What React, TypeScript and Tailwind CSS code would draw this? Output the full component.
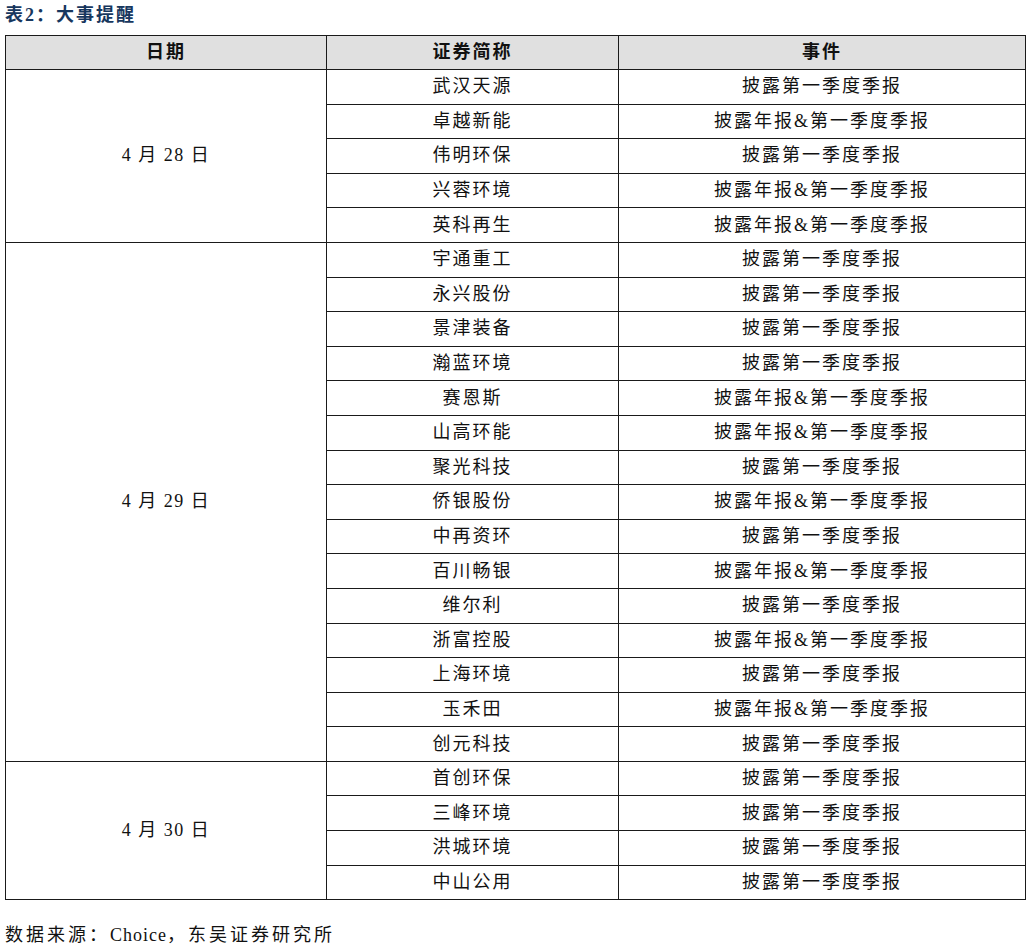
import React from "react"

const A = "披露第一季度季报"
const B = "披露年报&第一季度季报"

const groups: { date: [string, string]; rows: [string, string][] }[] = [
  {
    date: ["4", "28"],
    rows: [
      ["武汉天源", A],
      ["卓越新能", B],
      ["伟明环保", A],
      ["兴蓉环境", B],
      ["英科再生", B],
    ],
  },
  {
    date: ["4", "29"],
    rows: [
      ["宇通重工", A],
      ["永兴股份", A],
      ["景津装备", A],
      ["瀚蓝环境", A],
      ["赛恩斯", B],
      ["山高环能", B],
      ["聚光科技", A],
      ["侨银股份", B],
      ["中再资环", A],
      ["百川畅银", B],
      ["维尔利", A],
      ["浙富控股", B],
      ["上海环境", A],
      ["玉禾田", B],
      ["创元科技", A],
    ],
  },
  {
    date: ["4", "30"],
    rows: [
      ["首创环保", A],
      ["三峰环境", A],
      ["洪城环境", A],
      ["中山公用", A],
    ],
  },
]

const cell = "border border-[#1a1a1a] p-0 text-center align-middle"

const App = () => {
  return (
    <div className="min-h-screen bg-white px-[5px] font-['Liberation_Serif','Noto_Sans_CJK_SC',serif] text-[#111]">
      {/* Title */}
      <div className="h-[35px] pt-[3px] text-[18px] leading-[24px] font-bold tracking-[2px] text-[#17375e]">
        表2：大事提醒
      </div>

      <table className="w-[1020px] table-fixed border-collapse text-[18px] tracking-[2px]">
        <colgroup>
          <col className="w-[321px]" />
          <col className="w-[292px]" />
          <col className="w-[407px]" />
        </colgroup>
        <thead>
          <tr className="h-[34px] bg-[#e0e0e0] font-bold">
            <th className={cell}>日期</th>
            <th className={cell}>证券简称</th>
            <th className={cell}>事件</th>
          </tr>
        </thead>
        <tbody>
          {groups.map((g) =>
            g.rows.map(([name, event], i) => (
              <tr key={name} className="h-[34.6px]">
                {i === 0 && (
                  <td rowSpan={g.rows.length} className={cell}>
                    <span className="tracking-[1.5px]">
                      {g.date[0]} 月 {g.date[1]} 日
                    </span>
                  </td>
                )}
                <td className={cell}>{name}</td>
                <td className={cell}>{event}</td>
              </tr>
            ))
          )}
        </tbody>
      </table>

      {/* Source */}
      <div className="mt-[23px] text-[18px] leading-[24px] tracking-[3px]">
        数据来源：<span className="tracking-[1px]">Choice</span>，东吴证券研究所
      </div>
    </div>
  )
}

export default App
